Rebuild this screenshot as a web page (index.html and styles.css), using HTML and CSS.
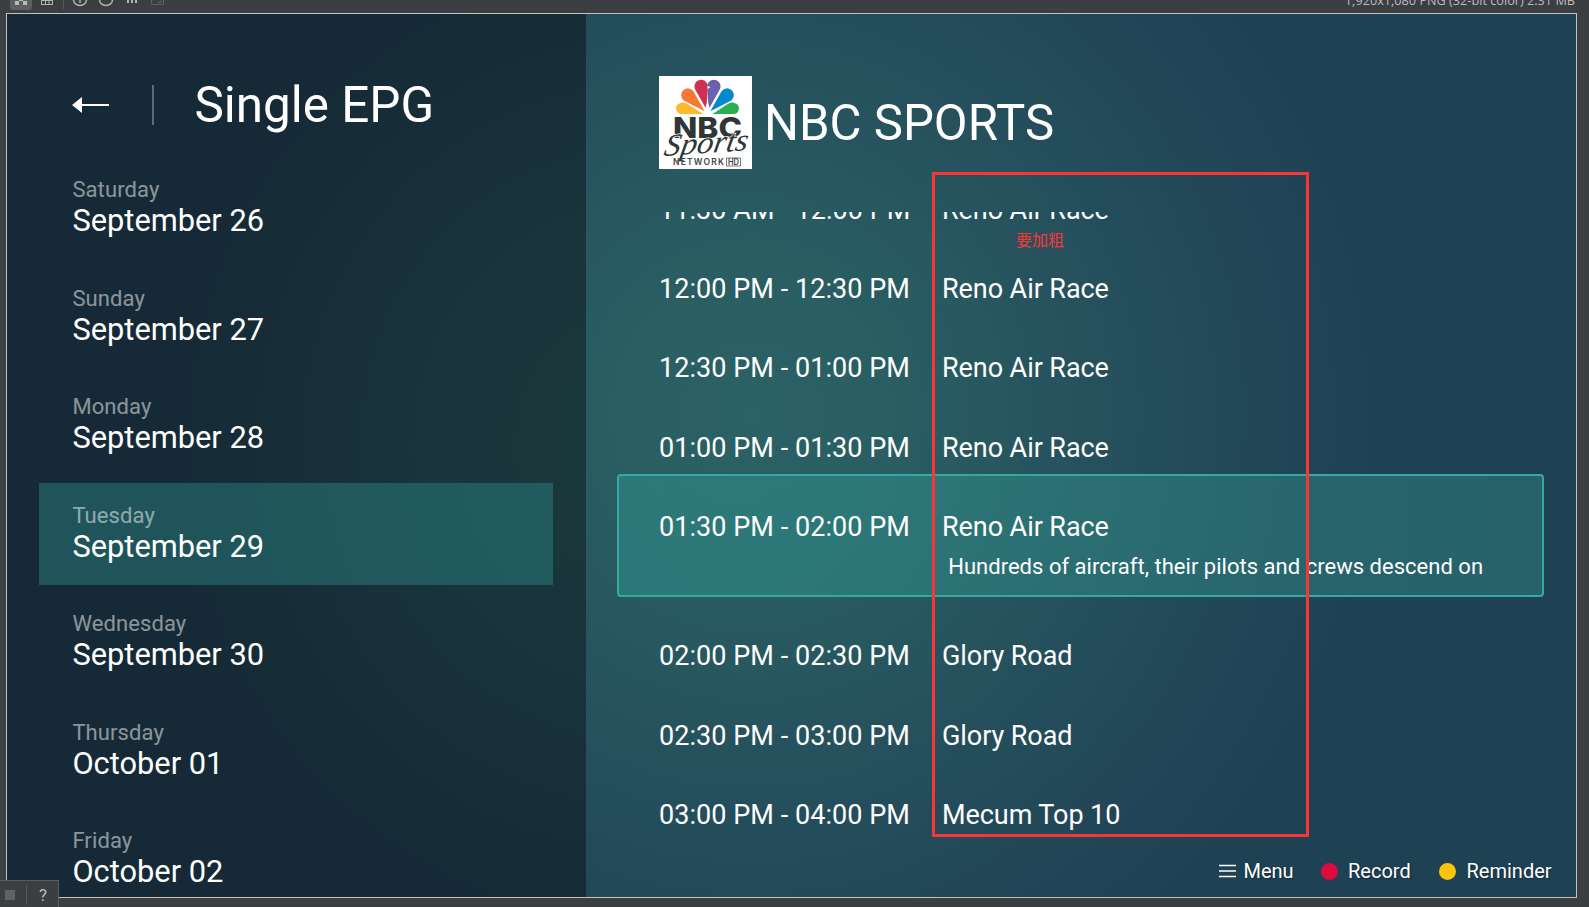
FILE: index.html
```html
<!DOCTYPE html>
<html lang="en"><head><meta charset="utf-8"><title>Single EPG</title><link rel="stylesheet" href="styles.css"></head>
<body>
<div class="toolbar">
<svg class="tools" width="180" height="13" viewBox="0 0 180 13"><path d="M10 0h22v7q0 3-3 3H13q-3 0-3-3z" fill="#5c6063"/><path d="M15 1h4v4h-4zM19 0h4v1h-4zM23 1h4v4h-4z" fill="#b8babb"/><path d="M41 4.500h12M41.500 0v5M45.500 0v5M49 0v5M52.500 0v5M41 .5h12" stroke="#afb1b3" fill="none"/><path d="M63.500 0v9" stroke="#55585a"/><path d="M73.500 0a6.500 5.500 0 0 0 13 0M80 0v3M99.500 0a6.500 5.500 0 0 0 13 0" stroke="#afb1b3" stroke-width="1.500" fill="none"/><path d="M128 0v3M132 0v3M136 0v3" stroke="#afb1b3" stroke-width="2"/><path d="M151.500 0v4.500h12V0M158 2.500h3V0" stroke="#5c6063" fill="none"/></svg>
<span class="meta">1,920x1,080 PNG (32-bit color) 2.31 MB</span>
</div>
<main class="frame">
<aside class="side">
<header class="head"><svg class="back" width="38" height="18" viewBox="0 0 38 18"><path d="M0 9 10 1v16z" fill="#fff"/><path d="M9 9h28" stroke="#fff" stroke-width="2"/></svg><i class="bar"></i><h1>Single EPG</h1></header>
<ul class="days">
<li><small>Saturday</small><b>September 26</b></li>
<li><small>Sunday</small><b>September 27</b></li>
<li><small>Monday</small><b>September 28</b></li>
<li class="on"><small>Tuesday</small><b>September 29</b></li>
<li><small>Wednesday</small><b>September 30</b></li>
<li><small>Thursday</small><b>October 01</b></li>
<li><small>Friday</small><b>October 02</b></li>
</ul>
</aside>
<section class="guide">
<header class="channel">
<svg class="logo" width="93" height="93" viewBox="0 0 93 93"><path fill="#fff" d="M0 0h93v93H0z"/>
<defs><path id="petal" d="M0-4-6.300-25a6.700 6.700 0 1 1 12.600 0z"/></defs>
<g transform="translate(48.500 38)"><use href="#petal" fill="#ce3250" transform="rotate(-13) translate(0 -1)"/><use href="#petal" fill="#6b62ad" transform="rotate(13) translate(0 -1)"/><use href="#petal" fill="#f87834" transform="rotate(-46)"/><use href="#petal" fill="#0089cf" transform="rotate(46)"/><path fill="#fdb92b" d="M-4 0h-21a5.500 5.500 0 0 1-3-10.500q3-2 7 0z"/><path fill="#29af4f" d="M5 0h20a5.500 5.500 0 0 0 3-10.500q-3-2-7 0z"/><path fill="#fff" d="M-4 0 0-13 4 0zM0-28l3 1-3 2z"/></g>
<text class="nbc" x="14" y="62" textLength="69" lengthAdjust="spacingAndGlyphs">NBC</text>
<text class="script" transform="translate(4 80) rotate(-4) skewX(-14)" x="0" y="0" textLength="84" lengthAdjust="spacingAndGlyphs">Sports</text>
<text class="net" x="14" y="89" textLength="51">NETWORK</text><path d="M67.500 82h14v8h-14z" fill="none" stroke="#555" stroke-width=".8"/><text class="net" x="69" y="89" textLength="11" lengthAdjust="spacingAndGlyphs">HD</text></svg>
<h2>NBC SPORTS</h2></header>
<ul class="shows">
<li><span>11:30 AM - 12:00 PM</span><b>Reno Air Race</b></li>
<li><span>12:00 PM - 12:30 PM</span><b>Reno Air Race</b></li>
<li><span>12:30 PM - 01:00 PM</span><b>Reno Air Race</b></li>
<li><span>01:00 PM - 01:30 PM</span><b>Reno Air Race</b></li>
<li class="now"><span>01:30 PM - 02:00 PM</span><b>Reno Air Race</b><p>Hundreds of aircraft, their pilots and crews descend on</p></li>
<li><span>02:00 PM - 02:30 PM</span><b>Glory Road</b></li>
<li><span>02:30 PM - 03:00 PM</span><b>Glory Road</b></li>
<li><span>03:00 PM - 04:00 PM</span><b>Mecum Top 10</b></li>
</ul>
<footer class="keys"><svg width="17" height="14" viewBox="0 0 17 14"><path d="M0 1.500h17M0 7h17M0 12.500h17" stroke="#fff" stroke-width="1.500"/></svg><span class="menu">Menu</span><i class="dot red"></i><span class="rec">Record</span><i class="dot yellow"></i><span class="rem">Reminder</span></footer>
</section>
</main>
<div class="mark"><span lang="zh">要加粗</span></div>
<div class="corner"><i></i><span>?</span></div>
</body></html>
```
FILE: styles.css
```css
*{box-sizing:border-box}
body{margin:0;width:1589px;height:907px;overflow:hidden;background:#3c3f41;font-family:Roboto,sans-serif;color:#fff;position:relative}
h1,h2,ul,p{margin:0;padding:0;font-weight:400}
b{font-weight:400}
li{list-style:none}
svg{display:block;flex:none}
.toolbar{height:13px;display:flex;justify-content:space-between;overflow:hidden;padding-right:14px}
.meta{font:12.700px/13px "Open Sans",sans-serif;color:#bbb;margin-top:-6px;white-space:nowrap}
.frame{margin-left:6px;width:1571px;height:885px;border:1px solid #c5c1bd;display:flex;overflow:hidden;background:radial-gradient(ellipse 620px 640px at 745px 400px,#2b6264 0,#295d62 25%,#254f5c 60%,#1f4154 100%)}
.side{width:579px;flex:none;background:radial-gradient(ellipse 480px 500px at 640px 430px,#1b393c 0,#19343b 45%,#152a36 100%)}
.head{display:flex;align-items:center;height:80px;margin-top:51px;padding-left:65px}
.bar{width:2px;height:40px;background:#5b6a73;margin:0 40.500px 0 42px}
h1{font-size:49.400px;line-height:58px;white-space:nowrap}
.days{padding:12.400px 0 0 32px}
.days li{width:514px;height:102px;margin-bottom:6.45px;padding:20px 0 0 33.400px}
.days small,.days b{display:block}
.days small{font-size:22px;line-height:26px;opacity:.5;letter-spacing:.1px}
.days b{font-size:30.800px;line-height:36px}
.on{background:rgba(44,138,136,.45)}
.guide{flex:1;padding-left:31px}
.channel{display:flex;margin-top:62px;padding-left:42px;height:135.500px}
h2{font-size:49.100px;line-height:94px;margin-left:12px;white-space:nowrap}
.nbc{font:800 29px Inter,sans-serif;fill:#303636}
.net{font:600 8.500px Inter,sans-serif;fill:#444}
.script{font:italic 31px "Liberation Serif",serif;fill:#303636;stroke:#fff;stroke-width:1.500px;paint-order:stroke}
.shows{height:637.500px;overflow:hidden}
.shows li{height:79.2px;padding-left:42px;display:grid;grid-template-columns:283px 1fr;align-content:start;font-size:27px;line-height:32px;white-space:nowrap;position:relative;top:-17.500px;letter-spacing:.05px}
.shows b{letter-spacing:-.07px}
.shows .now{height:123px;width:927px;border:2px solid #36a9a2;border-radius:4px;background:linear-gradient(90deg,rgba(48,148,145,.5),rgba(48,140,134,.43));padding:35px 0 0 40px;margin:-37px 0 43.700px}
.now p{grid-column:2;font-size:22px;line-height:28px;padding:10.500px 0 0 6.200px;letter-spacing:.02px}
.keys{display:flex;align-items:center;height:28px;margin-top:8px;padding-left:602px;font-size:20px;text-shadow:1px 1px 2px #122c38}
.menu{width:85px;padding-left:7.500px}
.dot{width:17px;height:17px;border-radius:50%;flex:none}
.red{background:#df0b3c}.yellow{background:#fac40c}
.rec{width:101px;padding-left:10px}.rem{padding-left:10.500px}
.mark{position:absolute;left:932px;top:172px;width:377px;height:665px;border:3px solid #fb3535;color:#fb3535;font:16px/24px "Noto Sans CJK SC",sans-serif;padding:52px 0 0 81px}
.corner{position:absolute;left:0;bottom:0;width:59px;height:27px;border-top:1px solid #5b5d5e;border-right:1px solid #5b5d5e;background:#3c3f41;display:flex;align-items:center;padding:2px 0 0 5px;color:#bbb;font-size:17px}
.corner i{width:10px;height:10px;background:#606263}
.corner span{border-left:1px solid #55585a;margin-left:11px;padding-left:12px}
```
